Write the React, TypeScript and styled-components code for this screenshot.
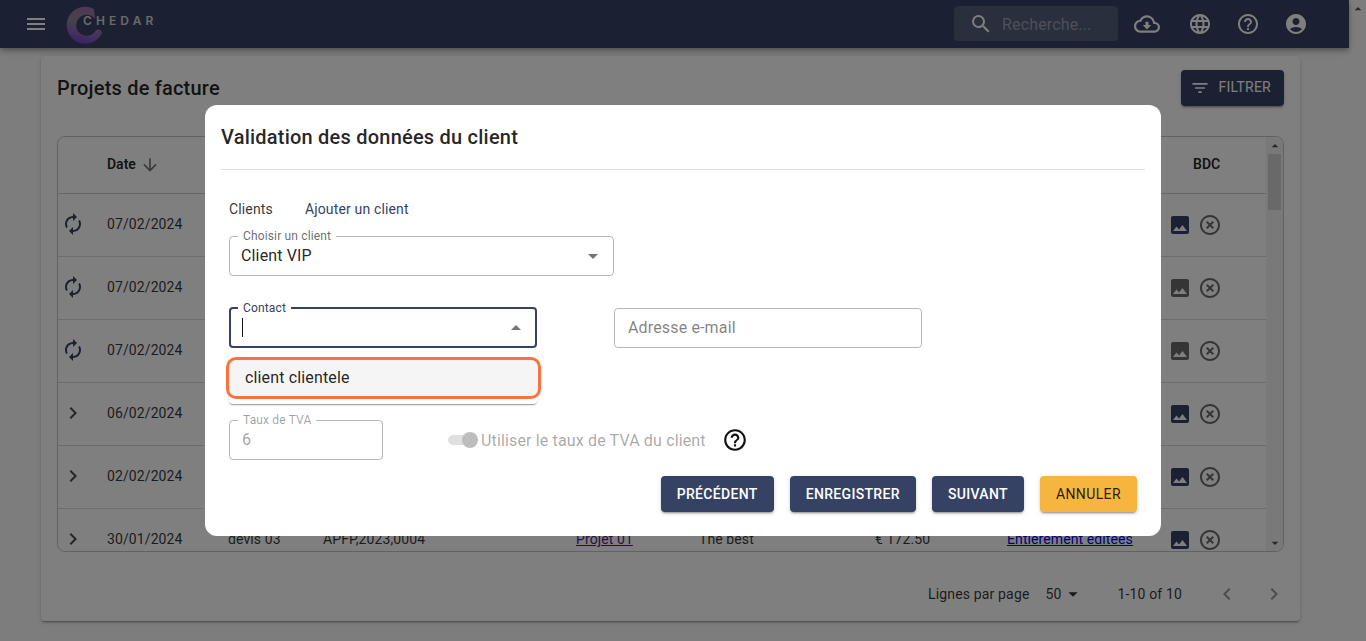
import React from "react";
import styled, {createGlobalStyle} from "styled-components";
import {
    MdAccountCircle, MdArrowDownward, MdArrowDropDown, MdArrowDropUp, MdAutorenew, MdChevronLeft, MdChevronRight,
    MdFilterList, MdHelpOutline, MdHighlightOff, MdImage, MdLanguage, MdMenu, MdOutlineCloudDownload, MdSearch,
} from "react-icons/md";

const primary = '#364264';

const Global = createGlobalStyle`
  html, body {
    margin: 0;
    height: 641px;
    overflow: hidden;
    font-family: Roboto, "Liberation Sans", sans-serif;
    letter-spacing: .15px;
    background: #fafafa;
  }
`;

const Page = styled.div`
  display: flex;
  height: 641px;
`;

const Content = styled.div`
  width: 1349px;
  display: flex;
  flex-direction: column;
`;

const PageScroll = styled.div`
  width: 17px;
  background: #fbfbfb;
  display: flex;
  justify-content: center;
  color: #505050;
`;

const AppBar = styled.header`
  height: 48px;
  flex: none;
  background: ${primary};
  color: #fff;
  display: flex;
  align-items: center;
  padding: 0 29px 0 24px;
  box-shadow: 0 2px 4px -1px rgba(0,0,0,.2), 0 4px 5px 0 rgba(0,0,0,.14), 0 1px 10px 0 rgba(0,0,0,.12);
  position: relative;
`;

const Logo = styled.div`
  position: relative;
  width: 40px;
  height: 40px;
  margin-left: 17px;
  margin-top: 4px;
`;

const LogoText = styled.span`
  position: absolute;
  left: 18px;
  top: 8px;
  font-family: Inter, sans-serif;
  font-weight: 600;
  font-size: 12px;
  line-height: 14px;
  letter-spacing: 4.1px;
  color: #d4d4d4;
`;

const Search = styled.div`
  margin-left: auto;
  margin-right: 5px;
  margin-top: -1px;
  width: 164px;
  height: 35px;
  box-sizing: border-box;
  padding-left: 15px;
  border-radius: 4px;
  background: rgba(255,255,255,.15);
  display: flex;
  align-items: center;
  gap: 9px;
  font-size: 16px;
  color: rgba(255,255,255,.42);
  & > svg {
    color: #fff;
  }
`;

const SearchText = styled.span`
  padding-top: 2px;
`;

const BarButton = styled.div<{$gap?: number}>`
  width: 48px;
  height: 48px;
  display: flex;
  align-items: center;
  justify-content: center;
  margin-right: ${p => p.$gap || 0}px;
`;

const Card = styled.main`
  margin: 8px 0 0 41px;
  width: 1259px;
  height: 565px;
  box-sizing: border-box;
  padding: 14px 16px 0;
  background: #fff;
  border-radius: 4px;
  box-shadow: 0 3px 1px -2px rgba(0,0,0,.2), 0 2px 2px 0 rgba(0,0,0,.14), 0 1px 5px 0 rgba(0,0,0,.12);
  display: flex;
  flex-direction: column;
`;

const CardHead = styled.div`
  display: flex;
  align-items: center;
  justify-content: space-between;
  height: 36px;
  margin-bottom: 30px;
`;

const CardTitle = styled.h2`
  margin: 0;
  font-size: 20px;
  font-weight: 500;
  letter-spacing: .2px;
  color: rgba(0,0,0,.87);
`;

const Button = styled.button<{$accent?: boolean}>`
  height: 36px;
  padding: 0 16px;
  border: 0;
  border-radius: 4px;
  display: flex;
  align-items: center;
  gap: 8px;
  font-family: inherit;
  font-size: 14px;
  letter-spacing: ${p => p.$accent ? .4 : .33}px;
  text-transform: uppercase;
  font-weight: ${p => p.$accent ? 400 : 500};
  background: ${p => p.$accent ? '#f5b53f' : primary};
  color: ${p => p.$accent ? 'rgba(0,0,0,.87)' : '#fff'};
  box-shadow: 0 3px 1px -2px rgba(0,0,0,.2), 0 2px 2px 0 rgba(0,0,0,.14), 0 1px 5px 0 rgba(0,0,0,.12);
`;

const FilterButton = styled(Button)`
  padding: 0 13px 2px 9px;
  font-weight: 400;
  letter-spacing: .25px;
  & > svg {
    margin-top: 2px;
  }
`;

const TableWrap = styled.div`
  height: 416px;
  flex: none;
  box-sizing: border-box;
  border: 1px solid rgba(0,0,0,.23);
  border-radius: 8px;
  display: flex;
  overflow: hidden;
`;

const Rows = styled.div`
  flex: 1;
  min-width: 0;
  overflow: hidden;
`;

const columns = '49px 121px 95px 253px 123px 176px 132px 161px 99px';

const HeadRow = styled.div`
  display: grid;
  grid-template-columns: ${columns};
  align-items: center;
  height: 54px;
  padding-bottom: 2px;
  border-bottom: 1px solid rgba(0,0,0,.18);
  font-size: 14px;
  font-weight: 600;
  letter-spacing: 0;
  color: rgba(0,0,0,.87);
`;

const HeadCell = styled.div<{$col: number}>`
  grid-column: ${p => p.$col};
  display: flex;
  align-items: center;
  gap: 4px;
  & > svg {
    color: rgba(0,0,0,.54);
    margin-top: 1px;
  }
`;

const BdcHead = styled(HeadCell)`
  padding-left: 25px;
`;

const Row = styled.div`
  display: grid;
  grid-template-columns: ${columns};
  align-items: center;
  height: 60px;
  padding-bottom: 2px;
  border-bottom: 1px solid rgba(0,0,0,.14);
  font-size: 14px;
  letter-spacing: .1px;
  color: rgba(0,0,0,.8);
`;

const ExpandCell = styled.div`
  display: flex;
  padding-left: 3px;
  color: rgba(0,0,0,.7);
`;

const SyncIcon = styled(MdAutorenew)`
  color: ${primary};
`;

const ProjectLink = styled.a`
  color: #551a8b;
  text-decoration: underline;
`;

const StatusLink = styled.a`
  color: #0000ee;
  text-decoration: underline;
`;

const BdcCell = styled.div<{$muted?: boolean}>`
  display: flex;
  gap: 6px;
  padding-top: 2px;
  color: rgba(0,0,0,.58);
  & > svg:first-child {
    color: ${p => p.$muted ? 'rgba(0,0,0,.58)' : primary};
  }
`;

const TableScroll = styled.div`
  width: 17px;
  flex: none;
  background: #f3f3f3;
  display: flex;
  flex-direction: column;
  align-items: center;
  justify-content: space-between;
  color: #505050;
`;

const Thumb = styled.div`
  width: 13px;
  height: 56px;
  flex: none;
  background: #d2d2d2;
  margin-bottom: auto;
`;

const ArrowBox = styled.div`
  height: 17px;
  flex: none;
  display: flex;
  align-items: center;
`;

const Pagination = styled.div`
  flex: none;
  display: flex;
  align-items: center;
  justify-content: flex-end;
  height: 24px;
  margin-top: 30px;
  margin-right: -2px;
  font-size: 14px;
  color: rgba(0,0,0,.8);
`;

const PerPage = styled.div`
  display: flex;
  align-items: center;
  margin-left: 16px;
  margin-right: 33px;
  width: 39px;
`;

const PageNav = styled.div`
  display: flex;
  gap: 23px;
  margin-left: 33px;
  color: rgba(0,0,0,.4);
`;

const Backdrop = styled.div`
  position: fixed;
  inset: 0;
  background: rgba(0,0,0,.5);
  display: flex;
  align-items: center;
  justify-content: center;
`;

const Modal = styled.section`
  width: 956px;
  height: 431px;
  box-sizing: border-box;
  padding: 16px 24px 24px 16px;
  background: #fff;
  border-radius: 12px;
  display: flex;
  flex-direction: column;
`;

const ModalTitle = styled.h2`
  margin: 0;
  height: 32px;
  line-height: 32px;
  font-size: 20px;
  font-weight: 500;
  letter-spacing: .22px;
  color: rgba(0,0,0,.87);
`;

const Divider = styled.hr`
  margin: 16px -8px 0 0;
  border: 0;
  border-top: 1px solid #e0e0e0;
`;

const Form = styled.div`
  padding-left: 8px;
  flex: 1;
  display: flex;
  flex-direction: column;
`;

const Tabs = styled.div`
  display: flex;
  gap: 32px;
  margin-top: 29px;
  height: 20px;
  line-height: 20px;
  font-size: 14px;
`;

const Tab = styled.span<{$link?: boolean}>`
  color: ${p => p.$link ? primary : 'rgba(0,0,0,.8)'};
`;

const Field = styled.div<{$width: number; $focus?: boolean; $disabled?: boolean}>`
  position: relative;
  width: ${p => p.$width}px;
  height: ${p => p.$focus ? 41 : 40}px;
  box-sizing: border-box;
  border: ${p => p.$focus ? `2px solid ${primary}` : '1px solid rgba(0,0,0,.28)'};
  border-radius: 4px;
  display: flex;
  align-items: center;
  justify-content: space-between;
  padding: 0 ${p => p.$focus ? 7 : 8}px 2px ${p => p.$focus ? 11 : 12}px;
  font-size: 16px;
  color: ${p => p.$disabled ? 'rgba(0,0,0,.38)' : 'rgba(0,0,0,.87)'};
`;

const FieldLabel = styled.label<{$focus?: boolean; $disabled?: boolean}>`
  position: absolute;
  top: -8px;
  left: ${p => p.$focus ? 7 : 8}px;
  padding: 0 5px;
  background: #fff;
  font-size: 12px;
  line-height: 14px;
  color: ${p => p.$focus ? primary : p.$disabled ? 'rgba(0,0,0,.38)' : 'rgba(0,0,0,.6)'};
`;

const SelectValue = styled.span`
  margin-left: -1px;
`;

const Caret = styled.span`
  width: 1px;
  height: 19px;
  margin-top: 2px;
  background: #111;
`;

const ArrowIcon = styled.span`
  display: flex;
  margin-top: 2px;
  color: rgba(0,0,0,.54);
`;

const Placeholder = styled.span`
  margin-left: 1px;
  color: rgba(0,0,0,.5);
`;

const SelectRow = styled.div`
  margin-top: 17px;
`;

const ContactRow = styled.div`
  margin-top: 31px;
  display: flex;
  align-items: flex-end;
  gap: 77px;
`;

const Menu = styled.div`
  position: absolute;
  top: 43px;
  left: -2px;
  width: 308px;
  height: 52px;
  box-sizing: border-box;
  padding-top: 5px;
  background: #fff;
  border-radius: 4px;
  box-shadow: 0 2px 1px -1px rgba(0,0,0,.2), 0 1px 1px 0 rgba(0,0,0,.14), 0 1px 3px 0 rgba(0,0,0,.12);
`;

const MenuItem = styled.div`
  margin: 0 -4px 0 -3px;
  height: 42px;
  box-sizing: border-box;
  padding: 0 0 1px 16px;
  display: flex;
  align-items: center;
  border: 3px solid #ff7240;
  border-radius: 10px;
  background: #f5f5f5;
  font-size: 16px;
  color: rgba(0,0,0,.87);
`;

const VatRow = styled.div`
  margin-top: 72px;
  display: flex;
  align-items: center;
`;

const Toggle = styled.div`
  position: relative;
  margin-left: 65px;
  width: 22px;
  height: 10px;
  border-radius: 5px;
  background: #e0e0e0;
`;

const ToggleThumb = styled.span`
  position: absolute;
  top: -3px;
  left: 14px;
  width: 16px;
  height: 16px;
  border-radius: 50%;
  background: #bdbdbd;
`;

const ToggleLabel = styled.span`
  margin-left: 11px;
  font-size: 16px;
  color: rgba(0,0,0,.36);
`;

const HelpIcon = styled(MdHelpOutline)`
  margin-left: 16px;
  color: #111;
`;

const Actions = styled.div`
  margin-top: 16px;
  display: flex;
  justify-content: flex-end;
  gap: 16px;
`;

type RowData = {
    date: string,
    sync?: boolean,
    muted?: boolean,
    devis?: string,
    numero?: string,
    projet?: string,
    desc?: string,
    montant?: string,
    statut?: string,
}

const rows: RowData[] = [
    {date: '07/02/2024', sync: true},
    {date: '07/02/2024', sync: true, muted: true},
    {date: '07/02/2024', sync: true, muted: true},
    {date: '06/02/2024'},
    {date: '02/02/2024'},
    {
        date: '30/01/2024',
        devis: 'devis 03',
        numero: 'APFP,2023,0004',
        projet: 'Projet 01',
        desc: 'The best',
        montant: '€ 172.50',
        statut: 'Entièrement éditées',
    },
];

const ChedarLogo = () => (
    <svg width="40" height="40" viewBox="0 0 40 40">
        <defs>
            <linearGradient id="ring" x1="0.8" y1="0" x2="0.6" y2="1">
                <stop offset="0" stopColor="#a86ab0"/>
                <stop offset="0.45" stopColor="#8c8896"/>
                <stop offset="0.8" stopColor="#8a60c0"/>
                <stop offset="1" stopColor="#7048c8"/>
            </linearGradient>
        </defs>
        <path
            d="M29 3 A18.5 18.5 0 1 0 37 27 A4 4 0 0 0 31 24 A10.5 10.5 0 1 1 30 13 Z"
            fill="url(#ring)"
        />
    </svg>
);

export default () => {
    return (
        <>
            <Global/>
            <Page>
                <Content>
                    <AppBar>
                        <MdMenu size={24}/>
                        <Logo>
                            <ChedarLogo/>
                            <LogoText>CHEDAR</LogoText>
                        </Logo>
                        <Search>
                            <MdSearch size={24}/>
                            <SearchText>Recherche...</SearchText>
                        </Search>
                        <BarButton $gap={5}><MdOutlineCloudDownload size={26}/></BarButton>
                        <BarButton><MdLanguage size={24}/></BarButton>
                        <BarButton><MdHelpOutline size={24}/></BarButton>
                        <BarButton><MdAccountCircle size={24}/></BarButton>
                    </AppBar>
                    <Card>
                        <CardHead>
                            <CardTitle>Projets de facture</CardTitle>
                            <FilterButton><MdFilterList size={20}/>Filtrer</FilterButton>
                        </CardHead>
                        <TableWrap>
                            <Rows>
                                <HeadRow>
                                    <HeadCell $col={2}>Date <MdArrowDownward size={20}/></HeadCell>
                                    <BdcHead $col={9}>BDC</BdcHead>
                                </HeadRow>
                                {rows.map((r, i) => (
                                    <Row key={i}>
                                        <ExpandCell>
                                            {r.sync ? <SyncIcon size={24}/> : <MdChevronRight size={24}/>}
                                        </ExpandCell>
                                        <span>{r.date}</span>
                                        <span>{r.devis}</span>
                                        <span>{r.numero}</span>
                                        <span>{r.projet && <ProjectLink>{r.projet}</ProjectLink>}</span>
                                        <span>{r.desc}</span>
                                        <span>{r.montant}</span>
                                        <span>{r.statut && <StatusLink>{r.statut}</StatusLink>}</span>
                                        <BdcCell $muted={r.muted}>
                                            <MdImage size={24}/>
                                            <MdHighlightOff size={24}/>
                                        </BdcCell>
                                    </Row>
                                ))}
                            </Rows>
                            <TableScroll>
                                <ArrowBox><MdArrowDropUp size={16}/></ArrowBox>
                                <Thumb/>
                                <ArrowBox><MdArrowDropDown size={16}/></ArrowBox>
                            </TableScroll>
                        </TableWrap>
                        <Pagination>
                            Lignes par page
                            <PerPage>50 <MdArrowDropDown size={22}/></PerPage>
                            1-10 of 10
                            <PageNav>
                                <MdChevronLeft size={24}/>
                                <MdChevronRight size={24}/>
                            </PageNav>
                        </Pagination>
                    </Card>
                </Content>
                <PageScroll>
                    <ArrowBox><MdArrowDropUp size={16}/></ArrowBox>
                </PageScroll>
            </Page>
            <Backdrop>
                <Modal>
                    <ModalTitle>Validation des données du client</ModalTitle>
                    <Divider/>
                    <Form>
                        <Tabs>
                            <Tab>Clients</Tab>
                            <Tab $link>Ajouter un client</Tab>
                        </Tabs>
                        <SelectRow>
                            <Field $width={385}>
                                <FieldLabel>Choisir un client</FieldLabel>
                                <SelectValue>Client VIP</SelectValue>
                                <ArrowIcon><MdArrowDropDown size={24}/></ArrowIcon>
                            </Field>
                        </SelectRow>
                        <ContactRow>
                            <Field $width={308} $focus>
                                <FieldLabel $focus>Contact</FieldLabel>
                                <Caret/>
                                <ArrowIcon><MdArrowDropUp size={24}/></ArrowIcon>
                                <Menu>
                                    <MenuItem>client clientele</MenuItem>
                                </Menu>
                            </Field>
                            <Field $width={308}>
                                <Placeholder>Adresse e-mail</Placeholder>
                            </Field>
                        </ContactRow>
                        <VatRow>
                            <Field $width={154} $disabled>
                                <FieldLabel $disabled>Taux de TVA</FieldLabel>
                                6
                            </Field>
                            <Toggle><ToggleThumb/></Toggle>
                            <ToggleLabel>Utiliser le taux de TVA du client</ToggleLabel>
                            <HelpIcon size={26}/>
                        </VatRow>
                        <Actions>
                            <Button>Précédent</Button>
                            <Button>Enregistrer</Button>
                            <Button>Suivant</Button>
                            <Button $accent>Annuler</Button>
                        </Actions>
                    </Form>
                </Modal>
            </Backdrop>
        </>
    )
};
